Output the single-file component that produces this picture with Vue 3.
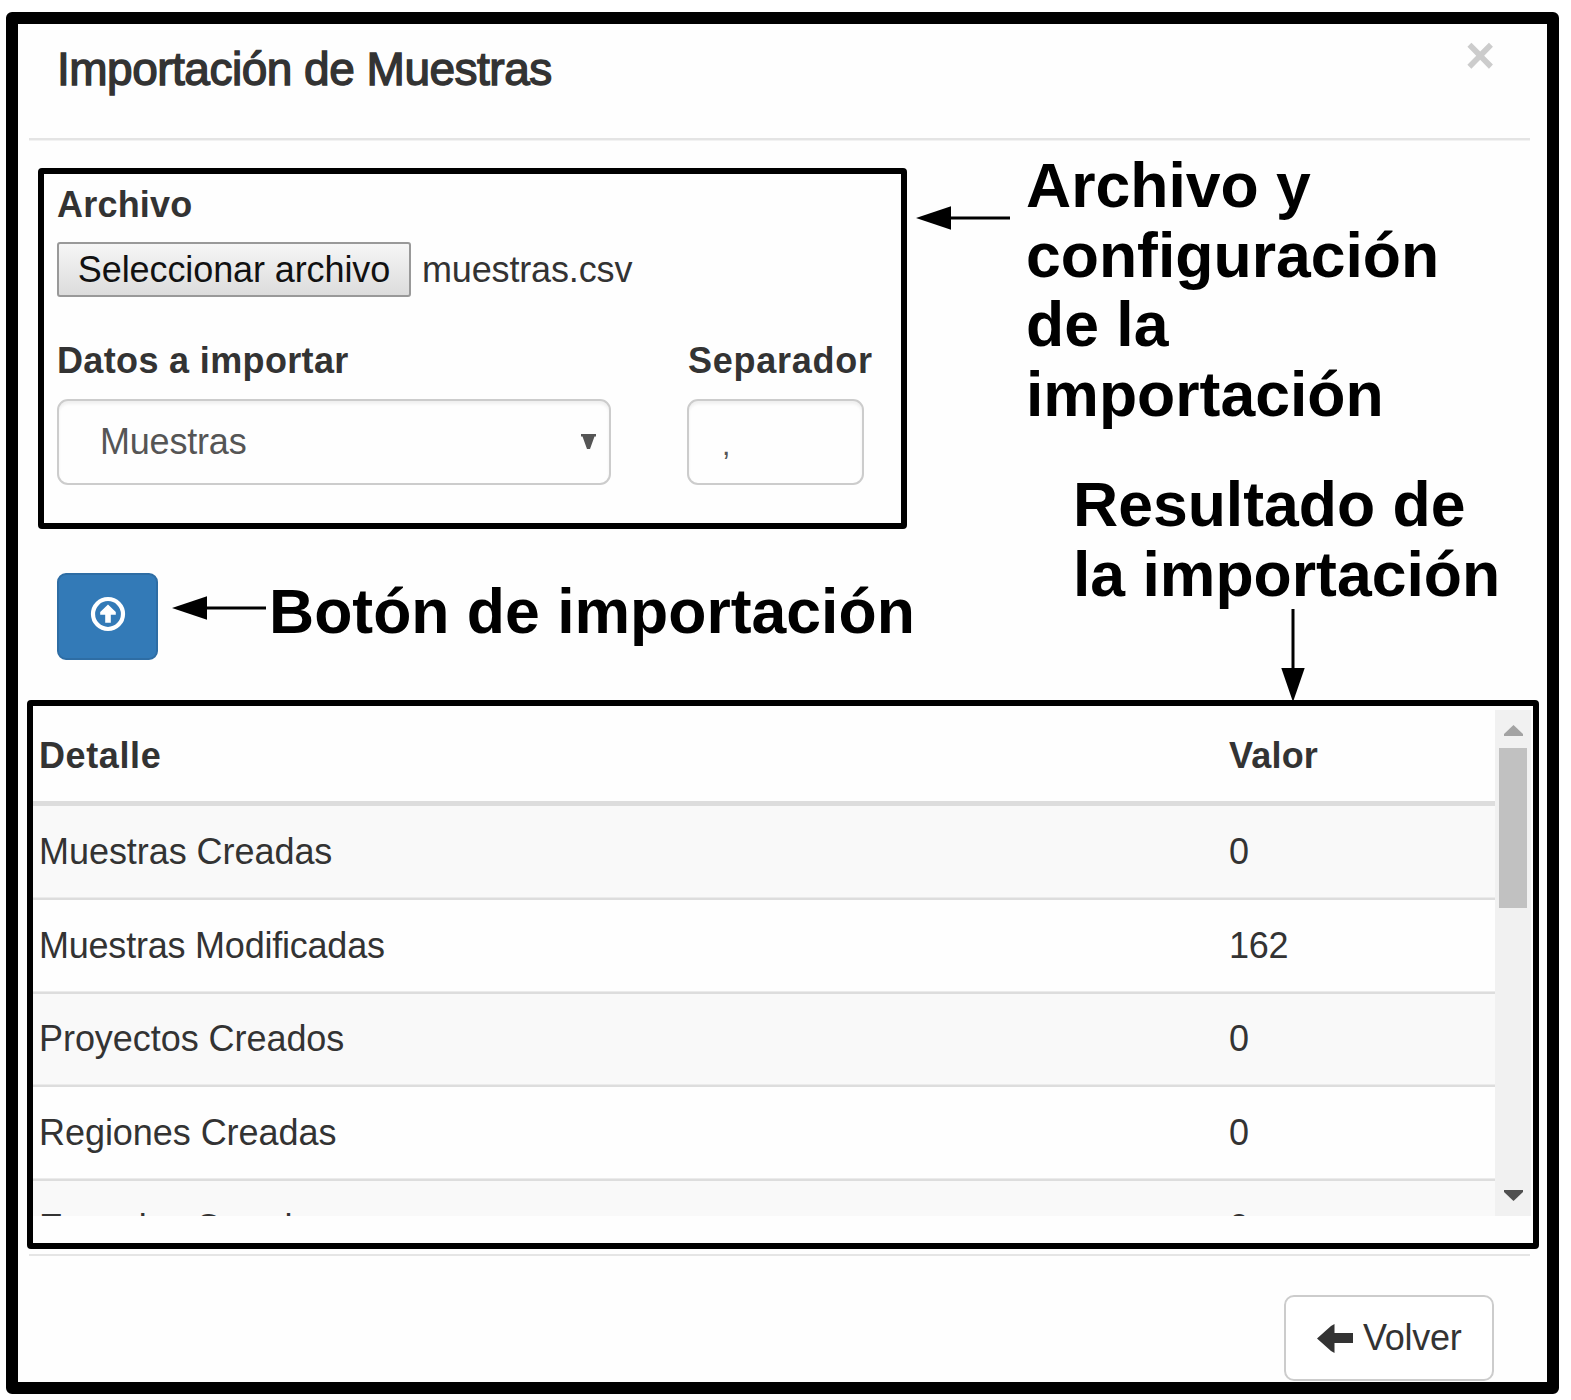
<script setup>
const rows = [
  { label: 'Muestras Creadas', value: '0' },
  { label: 'Muestras Modificadas', value: '162', tight: true },
  { label: 'Proyectos Creados', value: '0' },
  { label: 'Regiones Creadas', value: '0' },
  { label: 'Especies Creadas', value: '0' },
]
</script>

<template>
  <main class="modal">
    <header class="head">
      <h4 class="title">Importación de Muestras</h4>
      <button class="close" aria-label="Cerrar">×</button>
    </header>

    <div class="top">
      <div class="left">
        <section class="config">
          <label class="lbl archivo">Archivo</label>
          <div class="file">
            <button class="file-btn">Seleccionar archivo</button>
            <span class="file-name">muestras.csv</span>
          </div>
          <div class="fields">
            <div class="field data">
              <label class="lbl datos">Datos a importar</label>
              <div class="control select">
                <span>Muestras</span>
                <svg width="15" height="15" viewBox="0 0 15 15"><path d="M0 0h15v2.500h-1.500L9 15H6L1.500 2.500H0z" fill="#555" /></svg>
              </div>
            </div>
            <div class="field sep">
              <label class="lbl separador">Separador</label>
              <div class="control comma">,</div>
            </div>
          </div>
        </section>

        <div class="action">
          <button class="import" aria-label="Importar">
            <svg width="36" height="36" viewBox="0 0 36 36">
              <circle cx="18" cy="18" r="15" fill="none" stroke="#fff" stroke-width="4.200" />
              <path d="M18 8.500l7.800 7.500v2.800h-5v8h-5.600v-8h-5V16z" fill="#fff" />
            </svg>
          </button>
          <svg class="arrow-import" width="95" height="24" viewBox="0 0 95 24">
            <path d="M0 12L35 .3v23.400z" /><path d="M34 10.500h60v3H34z" />
          </svg>
          <p class="note">Botón de importación</p>
        </div>
      </div>

      <div class="right">
        <div class="note-config">
          <svg class="arrow-config" width="95" height="24" viewBox="0 0 95 24">
            <path d="M0 12L35 .3v23.400z" /><path d="M34 10.500h60v3H34z" />
          </svg>
          <p class="note">Archivo y<br />configuración<br />de la<br />importación</p>
        </div>
        <div class="note-result">
          <p class="note">Resultado de<br />la importación</p>
          <svg class="arrow-result" width="24" height="93" viewBox="0 0 24 93">
            <path d="M10.500 0h3v60h-3z" /><path d="M.3 59h23.400L12 93z" />
          </svg>
        </div>
      </div>
    </div>

    <section class="result">
      <div class="scroller">
        <div class="table">
          <div class="tr th"><span class="detalle">Detalle</span><span class="valor">Valor</span></div>
          <div
            v-for="(row, i) in rows"
            :key="row.label"
            class="tr td"
            :class="{ odd: i % 2 === 0, first: i === 0, tight: row.tight }"
          >
            <span>{{ row.label }}</span><span>{{ row.value }}</span>
          </div>
        </div>
        <div class="bar">
          <svg width="19" height="11" viewBox="0 0 19 11"><path d="M9.500 0L19 9v2H0V9z" fill="#a3a3a3" /></svg>
          <div class="thumb"></div>
          <svg class="down" width="19" height="11" viewBox="0 0 19 11"><path d="M0 0h19v2L9.500 11 0 2z" fill="#505050" /></svg>
        </div>
      </div>
    </section>

    <footer class="foot">
      <button class="back">
        <svg width="36" height="29" viewBox="0 0 36 29"><path d="M0 14.500L14 2l3.500-2v9H36v10H17.500v10L14 27z" fill="#333" /></svg>
        <span>Volver</span>
      </button>
    </footer>
  </main>
</template>

<style>
body {
  margin: 0;
  background: #fff;
}
</style>

<style scoped>
* {
  box-sizing: border-box;
}
.modal {
  width: 1553px;
  height: 1382px;
  margin: 12px 0 0 6px;
  border: 12px solid #000;
  border-radius: 6px;
  background: #fefefe;
  color: #333;
  font-family: "Liberation Sans", Arial, sans-serif;
  font-size: 36px;
  line-height: 40px;
  display: flex;
  flex-direction: column;
}
button {
  font: inherit;
  padding: 0;
  margin: 0;
}
svg {
  display: block;
  flex: none;
}
.head {
  height: 116px;
  flex: none;
  margin: 0 17px 0 11px;
  padding: 0 35px 0 28px;
  display: flex;
  justify-content: space-between;
  border-bottom: 2px solid #e4e4e4;
  box-shadow: 0 1px 0 #f2f2f2;
}
.title {
  margin: 20px 0 0;
  height: 50px;
  font-size: 46px;
  line-height: 50px;
  font-weight: 400;
  letter-spacing: -0.5px;
  -webkit-text-stroke: 1.4px #333;
  white-space: nowrap;
}
.close {
  height: 40px;
  margin-top: 12px;
  border: 0;
  background: none;
  color: #ccc;
  font-size: 51px;
  line-height: 40px;
  font-weight: 700;
}
.top {
  height: 560px;
  flex: none;
  display: flex;
}
.left {
  width: 898px;
  flex: none;
  padding: 28px 0 0 20px;
}
.config {
  width: 869px;
  height: 361px;
  border: 6px solid #000;
  border-radius: 4px;
  padding: 11px 0 0 13px;
}
.lbl {
  display: block;
  font-weight: 700;
  white-space: nowrap;
}
.archivo {
  letter-spacing: 0.2px;
}
.datos {
  letter-spacing: 0.35px;
}
.separador {
  letter-spacing: 0.75px;
  padding-left: 1px;
}
.file {
  display: flex;
  align-items: center;
  height: 55px;
  margin-top: 17px;
}
.file-btn {
  width: 354px;
  height: 55px;
  border: 2px solid #999;
  border-radius: 3px;
  background: linear-gradient(#f6f6f6, #dcdcdc);
  color: #111;
  letter-spacing: -0.1px;
}
.file-name {
  margin-left: 11px;
  letter-spacing: -0.15px;
}
.fields {
  display: flex;
  margin-top: 44px;
}
.data {
  width: 554px;
  margin-right: 76px;
}
.sep {
  width: 177px;
}
.control {
  height: 86px;
  margin-top: 18px;
  border: 2px solid #ccc;
  border-radius: 11px;
  box-shadow: inset 0 3px 3px rgba(0, 0, 0, 0.06);
  color: #555;
  display: flex;
  align-items: center;
}
.select {
  justify-content: space-between;
  padding: 0 13px 0 41px;
  letter-spacing: -0.2px;
}
.select svg {
  margin-top: -2px;
}
.comma {
  padding: 5px 0 0 33px;
  font-size: 30px;
}
.action {
  display: flex;
  margin: 44px 0 0 19px;
}
.import {
  flex: none;
  width: 101px;
  height: 87px;
  border: 2px solid #2e6da4;
  border-radius: 9px;
  background: #337ab7;
  display: flex;
  justify-content: center;
  padding-top: 21px;
}
.arrow-import {
  margin: 23px 0 0 14px;
}
.note {
  margin: 0;
  color: #000;
  font-size: 62.5px;
  font-weight: 700;
  line-height: 69.6px;
  white-space: nowrap;
}
.action .note {
  margin: 4px 0 0 2px;
}
.right {
  width: 631px;
}
.note-config {
  display: flex;
  padding-top: 11px;
}
.arrow-config {
  margin: 55px 15px 0 0;
}
.note-result {
  margin: 41px 0 0 157px;
}
.arrow-result {
  margin: -1px 0 0 208px;
}
.result {
  width: 1512px;
  height: 549px;
  flex: none;
  margin-left: 9px;
  border: 6px solid #000;
  border-radius: 4px;
  padding: 4px 2px 0 0;
}
.scroller {
  height: 506px;
  display: flex;
  overflow: hidden;
}
.table {
  width: 1462px;
  flex: none;
}
.tr {
  height: 93.67px;
  display: grid;
  grid-template-columns: 1190px 1fr;
  align-items: center;
  padding: 3px 0 0 6px;
  box-shadow: inset 0 2px 0 #ddd;
  border-top: 1px solid #ebebeb;
  letter-spacing: -0.05px;
}
.tight {
  letter-spacing: -0.22px;
}
.th {
  height: 91px;
  padding-top: 1px;
  border: 0;
  box-shadow: none;
  font-weight: 700;
}
.detalle {
  letter-spacing: 0.6px;
}
.valor {
  letter-spacing: 0.2px;
}
.odd {
  background: #f9f9f9;
}
.first {
  height: 96px;
  padding-top: 1px;
  border-top: 5px solid #ddd;
  box-shadow: none;
}
.tr:last-child {
  padding-top: 6px;
}
.bar {
  width: 36px;
  height: 506px;
  background: #f1f1f1;
  display: flex;
  flex-direction: column;
  align-items: center;
  padding: 15px 0;
}
.thumb {
  width: 28px;
  height: 160px;
  margin-top: 12px;
  background: #c1c1c1;
}
.down {
  margin-top: auto;
}
.foot {
  margin: 5px 17px 0 11px;
  border-top: 2px solid #e5e5e5;
  padding: 39px 36px 0 0;
  display: flex;
  justify-content: flex-end;
}
.back {
  width: 210px;
  height: 86px;
  border: 2px solid #ccc;
  border-radius: 10px;
  background: #fff;
  color: #333;
  display: flex;
  align-items: center;
  padding-left: 31px;
}
.back span {
  margin-left: 10px;
  letter-spacing: -0.25px;
}
</style>
